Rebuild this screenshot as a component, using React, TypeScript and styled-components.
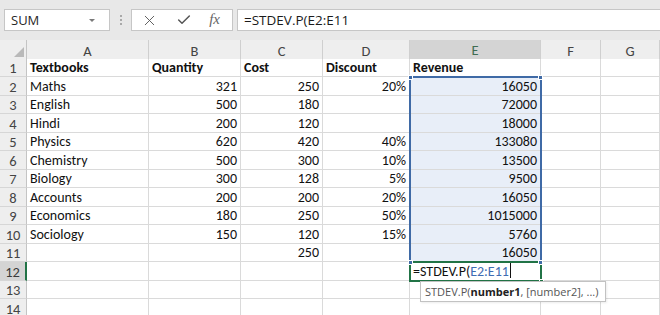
import React from 'react';
import styled, { createGlobalStyle } from 'styled-components';
import { X, Check } from 'lucide-react';

const GlobalStyle = createGlobalStyle`
  html, body {
    margin: 0;
    padding: 0;
    background: #fff;
    overflow: hidden;
  }
  body {
    font-family: 'Open Sans', 'Noto Sans', sans-serif;
  }
`;

const COLS = '27px 122px 92px 82px 87px 131px 60px 1fr';
const HEADERS = ['A', 'B', 'C', 'D', 'E', 'F', 'G'];

type Row = [string, string, string, string, string];

const ROWS: Row[] = [
  ['Textbooks', 'Quantity', 'Cost', 'Discount', 'Revenue'],
  ['Maths', '321', '250', '20%', '16050'],
  ['English', '500', '180', '', '72000'],
  ['Hindi', '200', '120', '', '18000'],
  ['Physics', '620', '420', '40%', '133080'],
  ['Chemistry', '500', '300', '10%', '13500'],
  ['Biology', '300', '128', '5%', '9500'],
  ['Accounts', '200', '200', '20%', '16050'],
  ['Economics', '180', '250', '50%', '1015000'],
  ['Sociology', '150', '120', '15%', '5760'],
  ['', '', '250', '', '16050'],
  ['', '', '', '', ''],
  ['', '', '', '', ''],
  ['', '', '', '', ''],
];

const Page = styled.div`
  width: 660px;
  height: 315px;
  overflow: hidden;
  background: #fff;
`;

const Toolbar = styled.div`
  height: 40px;
  box-sizing: border-box;
  background: #e8e8e8;
  display: flex;
  align-items: flex-start;
  padding: 9px 0 0 4px;
`;

const NameBox = styled.div`
  width: 106px;
  height: 22px;
  box-sizing: border-box;
  background: #fff;
  border: 1px solid #c6c6c6;
  display: flex;
  align-items: center;
  justify-content: space-between;
  padding: 0 14px 0 6px;
  font-size: 13px;
  color: #262626;
`;

const Caret = styled.span`
  width: 0;
  height: 0;
  border-left: 3px solid transparent;
  border-right: 3px solid transparent;
  border-top: 3px solid #7a7a7a;
`;

const Grip = styled.div`
  width: 21px;
  height: 22px;
  display: flex;
  flex-direction: column;
  align-items: center;
  justify-content: center;
  gap: 2px;
  & > span {
    width: 2px;
    height: 2px;
    background: #a9a9a9;
  }
`;

const FuncBox = styled.div`
  width: 102px;
  height: 22px;
  box-sizing: border-box;
  background: #fff;
  border: 1px solid #c6c6c6;
  display: flex;
  align-items: center;
  justify-content: space-between;
  padding: 0 12px 0 9px;
  color: #555;
`;

const Fx = styled.span`
  font-family: 'Liberation Serif', serif;
  font-style: italic;
  font-size: 15px;
  color: #666;
  margin-top: -2px;
`;

const FormulaInput = styled.div`
  flex: 1;
  margin-left: 4px;
  height: 22px;
  box-sizing: border-box;
  background: #fff;
  border: 1px solid #c6c6c6;
  border-right: none;
  display: flex;
  align-items: center;
  padding-left: 6px;
  font-size: 13.5px;
  color: #1a1a1a;
`;

const Sheet = styled.div`
  position: relative;
  font-family: Carlito, Calibri, Lato, 'Liberation Sans', sans-serif;
  font-size: 14px;
`;

const GridRow = styled.div<{ $h: number }>`
  display: grid;
  grid-template-columns: ${COLS};
  height: ${({ $h }) => $h}px;
`;

const Corner = styled.div`
  background: #eeeeee;
  border-right: 1px solid #c4c4c4;
  border-bottom: 1px solid #c4c4c4;
  display: flex;
  align-items: flex-end;
  justify-content: flex-end;
  padding: 0 2px 3px 0;
`;

const ColHead = styled.div<{ $active?: boolean }>`
  background: ${({ $active }) => ($active ? '#d4d4d4' : '#eeeeee')};
  border-right: 1px solid #cfcfcf;
  border-bottom: ${({ $active }) => ($active ? '2px solid #217346' : '1px solid #c4c4c4')};
  display: flex;
  align-items: center;
  justify-content: center;
  color: ${({ $active }) => ($active ? '#3f6d53' : '#444')};
  font-size: 14.5px;
  padding-top: 1px;
`;

const RowHead = styled.div<{ $active?: boolean }>`
  background: ${({ $active }) => ($active ? '#d4d4d4' : '#eeeeee')};
  border-right: ${({ $active }) => ($active ? '2px solid #217346' : '1px solid #c4c4c4')};
  border-bottom: 1px solid #d6d6d6;
  display: flex;
  align-items: flex-end;
  justify-content: center;
  color: ${({ $active }) => ($active ? '#3a3a3a' : '#444')};
  font-size: 14.5px;
  line-height: 16px;
`;

const Cell = styled.div<{ $right?: boolean; $bold?: boolean; $sel?: boolean }>`
  background: ${({ $sel }) => ($sel ? '#e8eef8' : '#fff')};
  border-right: 1px solid #dadada;
  border-bottom: 1px solid #dadada;
  display: flex;
  align-items: flex-end;
  justify-content: ${({ $right }) => ($right ? 'flex-end' : 'flex-start')};
  padding: 0 3px 0 3px;
  line-height: 16px;
  font-weight: ${({ $bold }) => ($bold ? 700 : 400)};
  color: #111;
  white-space: nowrap;
  overflow: visible;
`;

const Ref = styled.span`
  color: #3f6db3;
`;

const TextCaret = styled.span`
  display: inline-block;
  width: 1px;
  height: 15px;
  background: #111;
  margin-left: 1px;
  vertical-align: -2px;
`;

const Selection = styled.div`
  position: absolute;
  left: 409px;
  top: 36px;
  width: 133px;
  height: 187px;
  box-sizing: border-box;
  border: 2px solid #3f6aa6;
  pointer-events: none;
`;

const ActiveCell = styled.div`
  position: absolute;
  left: 409px;
  top: 221px;
  width: 133px;
  height: 21px;
  box-sizing: border-box;
  border: 2px solid #217346;
  pointer-events: none;
`;

const Handle = styled.div<{ $x: number; $y: number; $green?: boolean }>`
  position: absolute;
  left: ${({ $x }) => $x - 2}px;
  top: ${({ $y }) => $y - 2}px;
  width: 5px;
  height: 5px;
  box-sizing: border-box;
  background: ${({ $green }) => ($green ? '#217346' : '#3f6aa6')};
  border: 1px solid #fff;
`;

const Tooltip = styled.div`
  position: absolute;
  left: 420px;
  top: 241px;
  width: 186px;
  height: 21px;
  box-sizing: border-box;
  padding: 0 4px;
  background: #fff;
  border: 1px solid #c2c2c2;
  box-shadow: 1px 1px 2px rgba(0, 0, 0, 0.08);
  display: flex;
  align-items: center;
  font-family: 'Open Sans', 'Noto Sans', sans-serif;
  font-size: 11px;
  color: #555;
  white-space: nowrap;
  b {
    color: #222;
    font-weight: 700;
  }
`;

const rowHeight = (n: number) => (n % 2 === 1 ? 18 : 19);

const CornerMark = () => (
  <svg width="10" height="10" viewBox="0 0 10 10">
    <polygon points="10,0 10,10 0,10" fill="#b9b9b9" />
  </svg>
);

const App = () => {
  return (
    <Page>
      <GlobalStyle />
      <Toolbar>
        <NameBox>
          SUM
          <Caret />
        </NameBox>
        <Grip>
          <span />
          <span />
          <span />
        </Grip>
        <FuncBox>
          <X size={17} strokeWidth={1.3} />
          <Check size={16} strokeWidth={2.2} />
          <Fx>fx</Fx>
        </FuncBox>
        <FormulaInput>=STDEV.P(E2:E11</FormulaInput>
      </Toolbar>
      <Sheet>
        <GridRow $h={19}>
          <Corner>
            <CornerMark />
          </Corner>
          {HEADERS.map((h) => (
            <ColHead key={h} $active={h === 'E'}>
              {h}
            </ColHead>
          ))}
        </GridRow>
        {ROWS.map((row, i) => {
          const n = i + 1;
          const isFormulaRow = n === 12;
          return (
            <GridRow key={n} $h={rowHeight(n)}>
              <RowHead $active={isFormulaRow}>{n}</RowHead>
              <Cell $bold={n === 1}>{row[0]}</Cell>
              <Cell $bold={n === 1} $right={n > 1}>
                {row[1]}
              </Cell>
              <Cell $bold={n === 1} $right={n > 1}>
                {row[2]}
              </Cell>
              <Cell $bold={n === 1} $right={n > 1}>
                {row[3]}
              </Cell>
              {isFormulaRow ? (
                <Cell>
                  <span>
                    =STDEV.P(<Ref>E2:E11</Ref>
                    <TextCaret />
                  </span>
                </Cell>
              ) : (
                <Cell $bold={n === 1} $right={n > 1} $sel={n >= 2 && n <= 11}>
                  {row[4]}
                </Cell>
              )}
              <Cell />
              <Cell />
            </GridRow>
          );
        })}
        <Selection />
        <ActiveCell />
        <Handle $x={410} $y={37} />
        <Handle $x={540} $y={37} />
        <Handle $x={410} $y={222} />
        <Handle $x={540} $y={222} />
        <Handle $x={541} $y={241} $green />
        <Tooltip>
          STDEV.P(<b>number1</b>, [number2], ...)
        </Tooltip>
      </Sheet>
    </Page>
  );
};

export default App;
